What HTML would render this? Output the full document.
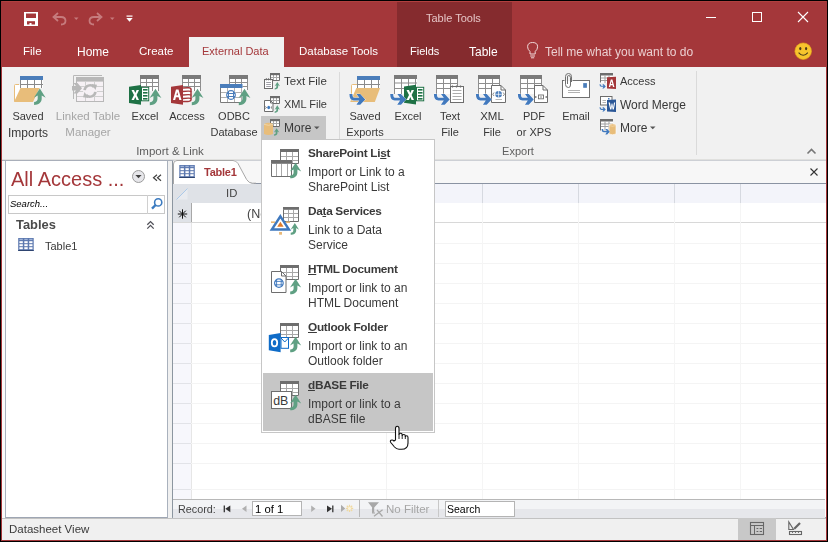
<!DOCTYPE html>
<html><head><meta charset="utf-8">
<style>
*{margin:0;padding:0;box-sizing:border-box}
html,body{width:828px;height:542px;overflow:hidden;background:#F0F0F0;font-family:"Liberation Sans",sans-serif;color:#383838;-webkit-font-smoothing:antialiased}
.a{position:absolute}
.t{position:absolute;white-space:nowrap;line-height:1;will-change:transform}
svg{position:absolute;overflow:visible}
.mt{font-size:11.8px;font-weight:bold;color:#3A3A3A;letter-spacing:-0.3px}
.md{font-size:12px;color:#3A3A3A}
u{text-decoration:underline;text-underline-offset:1px}
</style></head><body>

<!-- title bar -->
<div class="a" style="left:0;top:0;width:828px;height:67px;background:#A4373A"></div>
<div class="a" style="left:397px;top:2px;width:115px;height:65px;background:#852B2E"></div><div class="a" style="left:1px;top:1px;width:826px;height:1px;background:#B0403F"></div>
<div class="t" style="left:426px;top:13px;font-size:11px;color:#E5C4C5">Table Tools</div>

<!-- tabs -->
<div class="a" style="left:189px;top:37px;width:95px;height:30px;background:#F1F1F1"></div>
<div class="t" style="left:23px;top:45.5px;font-size:11.5px;color:#fff">File</div>
<div class="t" style="left:77px;top:45.5px;font-size:12px;color:#fff">Home</div>
<div class="t" style="left:139px;top:45.5px;font-size:11.5px;color:#fff">Create</div>
<div class="t" style="left:202px;top:45.5px;font-size:11px;color:#A4373A">External Data</div>
<div class="t" style="left:299px;top:45.5px;font-size:11.5px;color:#fff">Database Tools</div>
<div class="t" style="left:410px;top:45.5px;font-size:11px;color:#fff">Fields</div>
<div class="t" style="left:469px;top:45.5px;font-size:12px;color:#fff">Table</div>
<div class="t" style="left:545px;top:45.5px;font-size:12px;color:#EBCFD0">Tell me what you want to do</div>

<!--TITLESVG--><svg class="a" style="left:0;top:0" width="828" height="70" viewBox="0 0 828 70"><rect x="24" y="12" width="14" height="14" fill="#fff"/><rect x="26" y="13.5" width="10" height="4.5" fill="#A4373A"/><rect x="27" y="21.2" width="8" height="3.3" fill="#A4373A"/><rect x="29.5" y="23" width="2" height="2" fill="#fff"/><path d="M54.5,17 H61 Q65.5,17 65.5,20.8 Q65.5,24.5 61,24.5" fill="none" stroke="#C67B7D" stroke-width="1.8"/><path d="M58,13 L53.5,17 L58,21" fill="none" stroke="#C67B7D" stroke-width="1.8"/><path d="M74,17.5 H78.5 L76.25,20 Z" fill="#C67B7D"/><path d="M100.5,17 H94 Q89.5,17 89.5,20.8 Q89.5,24.5 94,24.5" fill="none" stroke="#C67B7D" stroke-width="1.8"/><path d="M97,13 L101.5,17 L97,21" fill="none" stroke="#C67B7D" stroke-width="1.8"/><path d="M110,17.5 H114.5 L112.25,20 Z" fill="#C67B7D"/><rect x="126.5" y="15.5" width="6" height="1.2" fill="#fff"/><path d="M126.3,18 H132.7 L129.5,21.8 Z" fill="#fff"/><rect x="706" y="17" width="10" height="1" fill="#fff"/><rect x="752.5" y="12.5" width="9" height="9" fill="none" stroke="#fff" stroke-width="1"/><path d="M798,12 L808,22 M808,12 L798,22" stroke="#fff" stroke-width="1.1"/><path d="M530,51.5 Q527.6,49.5 527.6,46.8 Q527.6,42.5 532.6,42.5 Q537.6,42.5 537.6,46.8 Q537.6,49.5 535.2,51.5 V54 H530 Z" fill="none" stroke="#F0D8D8" stroke-width="1"/><path d="M530.2,56 H535 M531,57.8 H534.2" stroke="#F0D8D8" stroke-width="1"/><circle cx="803.2" cy="51.2" r="8.3" fill="#F7C42D" stroke="#E6A817" stroke-width="0.6"/><ellipse cx="800.3" cy="48.6" rx="1.1" ry="1.6" fill="#4A3A1A"/><ellipse cx="806.1" cy="48.6" rx="1.1" ry="1.6" fill="#4A3A1A"/><path d="M798.6,52.6 Q803.2,58 807.8,52.6" fill="none" stroke="#4A3A1A" stroke-width="1.1"/></svg><!--/TITLESVG-->
<!-- ribbon -->
<div class="a" style="left:0;top:67px;width:828px;height:93px;background:#F1F1F1;border-bottom:1px solid #E0E0DE"></div>
<div class="a" style="left:339px;top:72px;width:1px;height:84px;background:#DADADA"></div>
<div class="a" style="left:696px;top:71px;width:1px;height:84px;background:#DADADA"></div>
<div id="rl" style="position:absolute;left:0;top:0">
<div class="t c" style="left:-22px;top:110.6px;width:100px;text-align:center;font-size:11px">Saved</div>
<div class="t c" style="left:-22px;top:126.6px;width:100px;text-align:center;font-size:12px">Imports</div>
<div class="t c" style="left:38px;top:110.6px;width:100px;text-align:center;font-size:11.5px;color:#A6A6A6">Linked Table</div>
<div class="t c" style="left:38px;top:126.6px;width:100px;text-align:center;font-size:11.5px;color:#A6A6A6">Manager</div>
<div class="t c" style="left:95px;top:110.6px;width:100px;text-align:center;font-size:11px">Excel</div>
<div class="t c" style="left:137px;top:110.6px;width:100px;text-align:center;font-size:11px">Access</div>
<div class="t c" style="left:184px;top:110.6px;width:100px;text-align:center;font-size:11px">ODBC</div>
<div class="t c" style="left:184px;top:126.6px;width:100px;text-align:center;font-size:11px">Database</div>
<div class="t c" style="left:120px;top:146.2px;width:100px;text-align:center;font-size:11.5px;color:#5E5E5E">Import &amp; Link</div>
<div class="t" style="left:283.5px;top:76.4px;font-size:11.5px">Text File</div>
<div class="t" style="left:283.5px;top:98.9px;font-size:11px">XML File</div>
<div class="a" style="left:261px;top:116px;width:65px;height:23px;background:#C6C6C6"></div>
<div class="t" style="left:283.5px;top:122.2px;font-size:12px">More</div>
<div class="t c" style="left:315px;top:110.6px;width:100px;text-align:center;font-size:11px">Saved</div>
<div class="t c" style="left:315px;top:126.6px;width:100px;text-align:center;font-size:11px">Exports</div>
<div class="t c" style="left:358px;top:110.6px;width:100px;text-align:center;font-size:11px">Excel</div>
<div class="t c" style="left:400px;top:110.6px;width:100px;text-align:center;font-size:11px">Text</div>
<div class="t c" style="left:400px;top:126.6px;width:100px;text-align:center;font-size:11px">File</div>
<div class="t c" style="left:441.5px;top:110.6px;width:100px;text-align:center;font-size:11.5px">XML</div>
<div class="t c" style="left:442px;top:126.6px;width:100px;text-align:center;font-size:11px">File</div>
<div class="t c" style="left:483.5px;top:110.6px;width:100px;text-align:center;font-size:11px">PDF</div>
<div class="t c" style="left:484px;top:126.6px;width:100px;text-align:center;font-size:11px">or XPS</div>
<div class="t c" style="left:525.5px;top:110.6px;width:100px;text-align:center;font-size:11px">Email</div>
<div class="t c" style="left:467.5px;top:146.2px;width:100px;text-align:center;font-size:11px;color:#5E5E5E">Export</div>
<div class="t" style="left:619.5px;top:76.4px;font-size:11px">Access</div>
<div class="t" style="left:619.5px;top:98.9px;font-size:12px">Word Merge</div>
<div class="t" style="left:619.5px;top:122.2px;font-size:12px">More</div>
</div>

<!--RIBBONSVG--><svg class="a" style="left:0;top:0" width="828" height="542" viewBox="0 0 828 542"><defs>
<path id="ga" d="M0,-0.3 L5.9,9 L1.9,6.8 L1.9,10 C1.9,13.8 -1.3,16.1 -5.7,16.1 L-5.7,13.1 C-3.6,13.1 -2.1,12.1 -2.1,10 L-2.1,6.8 L-5.9,9 Z" fill="#5FA083"/>
<path id="ba" d="M0,0 L-5,5.2 L-8.8,5.2 L-5.9,1.05 L-11.3,1.05 Q-15.8,1.05 -15.8,-5.35 L-12.8,-5.35 Q-12.8,-1.65 -11,-1.65 L-5.9,-1.65 L-8.7,-5.35 L-5,-5.35 Z" fill="#4179BE" stroke="#fff" stroke-width="0.7" paint-order="stroke"/>
</defs><path d="M14.5,101.5 V85.5 Q14.5,84.5 15.5,84.5 H19" fill="none" stroke="#E8BD7A" stroke-width="1"/><rect x="15" y="85" width="5" height="16" fill="#fff"/><rect x="20" y="76" width="23" height="12" fill="#fff"/><rect x="20" y="76" width="23" height="4" fill="#4A7DBA"/><rect x="20" y="80" width="1" height="8" fill="#8A8A8A"/><rect x="27" y="80" width="1" height="8" fill="#8A8A8A"/><rect x="34" y="80" width="1" height="8" fill="#8A8A8A"/><rect x="41" y="80" width="1" height="8" fill="#8A8A8A"/><rect x="20" y="84" width="23" height="1" fill="#8A8A8A"/><path d="M20.5,88 H39.5 L33,102 H14 Z" fill="#E8BD7A"/><use href="#ga" transform="translate(39.8,88.8) scale(1)"/><path d="M73.5,99 V75.5 H102" fill="none" stroke="#B8B8B8" stroke-width="1"/><rect x="76.5" y="77.5" width="27" height="24" fill="#F6F1F5" stroke="#B8B8B8" stroke-width="1"/><rect x="76" y="77" width="28" height="4.6" fill="#B8B8B8"/><rect x="77" y="86" width="26" height="1" fill="#CFCFCF"/><rect x="77" y="91" width="26" height="1" fill="#CFCFCF"/><rect x="77" y="96" width="26" height="1" fill="#CFCFCF"/><rect x="85" y="81" width="1" height="20" fill="#CFCFCF"/><rect x="94" y="81" width="1" height="20" fill="#CFCFCF"/><path d="M72,86 H76 L73.5,83 H77.5 L82,88.3 L77.5,93.5 H73.5 L76,90.5 H72 Z" fill="#B8B8B8"/><circle cx="90" cy="91" r="7" fill="#F6F1F5"/><path d="M84.6,90.2 A5.5,5.5 0 0 1 94,87" fill="none" stroke="#B8B8B8" stroke-width="2.6"/><path d="M91.5,84 L97,84.8 L95.5,90 Z" fill="#B8B8B8"/><path d="M95.4,91.8 A5.5,5.5 0 0 1 86,95" fill="none" stroke="#B8B8B8" stroke-width="2.6"/><path d="M88.5,98 L83,97.2 L84.5,92 Z" fill="#B8B8B8"/><rect x="140" y="75" width="19" height="16" fill="#fff"/><rect x="140" y="75" width="19" height="4" fill="#7A7A7A"/><rect x="140" y="79" width="1" height="12" fill="#8E8E8E"/><rect x="146" y="79" width="1" height="12" fill="#8E8E8E"/><rect x="152" y="79" width="1" height="12" fill="#8E8E8E"/><rect x="158" y="79" width="1" height="12" fill="#8E8E8E"/><rect x="140" y="82" width="19" height="1" fill="#8E8E8E"/><rect x="140" y="86" width="19" height="1" fill="#8E8E8E"/><path d="M129,86.8 L141,85 V104.7 L129,103 Z" fill="#1E7145"/><rect x="141.5" y="87.3" width="7.2" height="13.5" fill="#fff" stroke="#1E7145" stroke-width="1"/><rect x="143" y="89" width="4.5" height="1.6" fill="#1E7145"/><rect x="143" y="92" width="4.5" height="1.6" fill="#1E7145"/><rect x="143" y="95" width="4.5" height="1.6" fill="#1E7145"/><rect x="143" y="98" width="4.5" height="1.6" fill="#1E7145"/><path d="M131.5,90 H134 L135.3,93 L136.6,90 H139 L136.6,95 L139,100 H136.6 L135.3,97 L134,100 H131.5 L134,95 Z" fill="#fff"/><use href="#ga" transform="translate(155.5,89.1) scale(1)"/><rect x="182" y="75" width="19" height="16" fill="#fff"/><rect x="182" y="75" width="19" height="4" fill="#7A7A7A"/><rect x="182" y="79" width="1" height="12" fill="#8E8E8E"/><rect x="188" y="79" width="1" height="12" fill="#8E8E8E"/><rect x="194" y="79" width="1" height="12" fill="#8E8E8E"/><rect x="200" y="79" width="1" height="12" fill="#8E8E8E"/><rect x="182" y="82" width="19" height="1" fill="#8E8E8E"/><rect x="182" y="86" width="19" height="1" fill="#8E8E8E"/><path d="M171,86.8 L183,85 V104.7 L171,103 Z" fill="#A4373A"/><path d="M183,88 Q191,87 191,89 V100 Q191,102 183,101.5" fill="#fff" stroke="#A4373A" stroke-width="1.5"/><path d="M183,91.5 Q191,90.5 191,92.0" fill="none" stroke="#A4373A" stroke-width="1.4"/><path d="M183,95 Q191,94 191,95.5" fill="none" stroke="#A4373A" stroke-width="1.4"/><path d="M183,98.5 Q191,97.5 191,99.0" fill="none" stroke="#A4373A" stroke-width="1.4"/><path d="M173,100 L176,89.5 H178.5 L181.5,100 H179.3 L178.6,97.3 H175.9 L175.2,100 Z M176.4,95.3 H178.1 L177.25,92 Z" fill="#fff" fill-rule="evenodd"/><use href="#ga" transform="translate(197.5,89.1) scale(1)"/><rect x="229" y="75" width="19" height="15" fill="#fff"/><rect x="229" y="75" width="19" height="4" fill="#7A7A7A"/><rect x="229" y="79" width="1" height="11" fill="#8E8E8E"/><rect x="235" y="79" width="1" height="11" fill="#8E8E8E"/><rect x="241" y="79" width="1" height="11" fill="#8E8E8E"/><rect x="247" y="79" width="1" height="11" fill="#8E8E8E"/><rect x="229" y="82" width="19" height="1" fill="#8E8E8E"/><rect x="229" y="86" width="19" height="1" fill="#8E8E8E"/><rect x="220" y="84" width="22.5" height="19" fill="#fff"/><rect x="220" y="84" width="22.5" height="4" fill="#4A7DBA"/><path d="M220.5,88 V102.5 H242" fill="none" stroke="#7A7A7A" stroke-width="1"/><rect x="221" y="92" width="21" height="1" fill="#B0B0B0"/><rect x="221" y="97" width="21" height="1" fill="#B0B0B0"/><rect x="227" y="88" width="1" height="14" fill="#B0B0B0"/><rect x="234" y="88" width="1" height="14" fill="#B0B0B0"/><rect x="241" y="88" width="1" height="14" fill="#B0B0B0"/><circle cx="231" cy="95" r="5" fill="#fff"/><circle cx="231" cy="95" r="4.3" fill="none" stroke="#4A7DBA" stroke-width="1.2"/><path d="M228.5,91.5 V98.5 M233.5,91.5 V98.5 M227,93.5 H235 M227,96.5 H235" stroke="#4A7DBA" stroke-width="1"/><use href="#ga" transform="translate(244.5,89.1) scale(1)"/><rect x="270" y="73" width="10" height="8" fill="#fff"/><path d="M273.5,75 V80 M276.5,75 V80 M270,77.5 H280" stroke="#A8A8A8" stroke-width="1"/><rect x="270" y="73" width="10" height="2.2" fill="#6D6D6D"/><path d="M270.5,75 V80.5 H279.5 V75" fill="none" stroke="#6D6D6D" stroke-width="1"/><rect x="264.5" y="79.5" width="8" height="9" fill="#fff" stroke="#6D6D6D" stroke-width="1"/><rect x="265.8" y="78.3" width="1.2" height="2" fill="#6D6D6D"/><rect x="267.9" y="78.3" width="1.2" height="2" fill="#6D6D6D"/><rect x="270" y="78.3" width="1.2" height="2" fill="#6D6D6D"/><path d="M266.2,82.5 H271 M266.2,84.5 H271 M266.2,86.5 H271" stroke="#A0A0A8" stroke-width="1"/><use href="#ga" transform="translate(277.3,82.2) scale(0.46)"/><rect x="270" y="96" width="10" height="8" fill="#fff"/><path d="M273.5,98 V103 M276.5,98 V103 M270,100.5 H280" stroke="#A8A8A8" stroke-width="1"/><rect x="270" y="96" width="10" height="2.2" fill="#6D6D6D"/><path d="M270.5,98 V103.5 H279.5 V98" fill="none" stroke="#6D6D6D" stroke-width="1"/><path d="M264.5,100.5 H270.5 L273,103 V111.5 H264.5 Z" fill="#fff" stroke="#6D6D6D" stroke-width="1"/><path d="M270.5,100.5 V103 H273" fill="none" stroke="#6D6D6D" stroke-width="1"/><ellipse cx="268.7" cy="107.5" rx="1.4" ry="1.7" fill="#3F78BD"/><path d="M265.3,106.5 L266.5,107.5 L265.3,108.5 M272.1,106.5 L270.9,107.5 L272.1,108.5" fill="none" stroke="#555" stroke-width="0.8"/><use href="#ga" transform="translate(277.3,105.5) scale(0.46)"/><rect x="270" y="119" width="10" height="8" fill="#fff"/><path d="M273.5,121 V126 M276.5,121 V126 M270,123.5 H280" stroke="#A8A8A8" stroke-width="1"/><rect x="270" y="119" width="10" height="2.2" fill="#6D6D6D"/><path d="M270.5,121 V126.5 H279.5 V121" fill="none" stroke="#6D6D6D" stroke-width="1"/><path d="M264,124 Q268.5,121.5 273,124 V134 Q268.5,136 264,134 Z" fill="#E8BD7A"/><path d="M264,124.3 Q268.5,126.3 273,124.3" fill="none" stroke="#F6E2BE" stroke-width="0.6"/><use href="#ga" transform="translate(276.6,128.3) scale(0.46)"/><path d="M351.5,94 V85.5 Q351.5,84.5 352.5,84.5 H357" fill="none" stroke="#E8BD7A" stroke-width="1"/><rect x="352" y="85" width="5" height="10" fill="#fff"/><rect x="357" y="76" width="23" height="12" fill="#fff"/><rect x="357" y="76" width="23" height="4" fill="#4A7DBA"/><rect x="357" y="80" width="1" height="8" fill="#8A8A8A"/><rect x="364" y="80" width="1" height="8" fill="#8A8A8A"/><rect x="371" y="80" width="1" height="8" fill="#8A8A8A"/><rect x="378" y="80" width="1" height="8" fill="#8A8A8A"/><rect x="357" y="84" width="23" height="1" fill="#8A8A8A"/><path d="M356.3,88 H380.1 L374.8,102 H350.2 Z" fill="#E8BD7A"/><use href="#ba" transform="translate(365.2,99.45) scale(1)"/><rect x="394" y="75" width="23" height="19" fill="#fff"/><rect x="394" y="75" width="23" height="4" fill="#7A7A7A"/><rect x="394" y="79" width="1" height="15" fill="#8E8E8E"/><rect x="401" y="79" width="1" height="15" fill="#8E8E8E"/><rect x="408" y="79" width="1" height="15" fill="#8E8E8E"/><rect x="415" y="79" width="1" height="15" fill="#8E8E8E"/><rect x="394" y="82.5" width="23" height="1" fill="#8E8E8E"/><rect x="394" y="88" width="23" height="1" fill="#8E8E8E"/><path d="M404,86.5 L416,84.7 V104.5 L404,102.8 Z" fill="#1E7145"/><rect x="416.5" y="87.3" width="7.2" height="13.5" fill="#fff" stroke="#1E7145" stroke-width="1"/><rect x="418" y="89" width="4.5" height="1.6" fill="#1E7145"/><rect x="418" y="92" width="4.5" height="1.6" fill="#1E7145"/><rect x="418" y="95" width="4.5" height="1.6" fill="#1E7145"/><rect x="418" y="98" width="4.5" height="1.6" fill="#1E7145"/><path d="M406.5,90 H409 L410.3,93 L411.6,90 H414 L411.6,95 L414,100 H411.6 L410.3,97 L409,100 H406.5 L409,95 Z" fill="#fff"/><use href="#ba" transform="translate(406,99.45) scale(1)"/><rect x="436" y="75" width="22" height="19" fill="#fff"/><rect x="436" y="75" width="22" height="4" fill="#7A7A7A"/><rect x="436" y="79" width="1" height="15" fill="#8E8E8E"/><rect x="443" y="79" width="1" height="15" fill="#8E8E8E"/><rect x="450" y="79" width="1" height="15" fill="#8E8E8E"/><rect x="457" y="79" width="1" height="15" fill="#8E8E8E"/><rect x="436" y="83" width="22" height="1" fill="#8E8E8E"/><rect x="436" y="88" width="22" height="1" fill="#8E8E8E"/><rect x="450.5" y="86.5" width="13" height="16" fill="#fff" stroke="#6D6D6D" stroke-width="1"/><path d="M452.5,85.5 V87.5 M456.5,85.5 V87.5 M460.5,85.5 V87.5" stroke="#6D6D6D" stroke-width="1.2"/><path d="M452.5,90.5 H461.5 M452.5,93.5 H461.5 M452.5,96.5 H461.5 M452.5,99.5 H461.5" stroke="#A4A4A4" stroke-width="0.9"/><use href="#ba" transform="translate(449.7,99.45) scale(1)"/><rect x="478" y="75" width="22" height="19" fill="#fff"/><rect x="478" y="75" width="22" height="4" fill="#7A7A7A"/><rect x="478" y="79" width="1" height="15" fill="#8E8E8E"/><rect x="485" y="79" width="1" height="15" fill="#8E8E8E"/><rect x="492" y="79" width="1" height="15" fill="#8E8E8E"/><rect x="499" y="79" width="1" height="15" fill="#8E8E8E"/><rect x="478" y="83" width="22" height="1" fill="#8E8E8E"/><rect x="478" y="88" width="22" height="1" fill="#8E8E8E"/><path d="M491.5,85.5 H501 L505.5,90 V102.5 H491.5 Z" fill="#fff" stroke="#6D6D6D" stroke-width="1"/><path d="M501,85.5 V90 H505.5" fill="none" stroke="#6D6D6D" stroke-width="1"/><circle cx="498.6" cy="94.3" r="3.3" fill="#4A7DBA"/><path d="M495.3,94.3 H501.9 M498.6,91 V97.6" stroke="#fff" stroke-width="0.7"/><path d="M494,92.5 L492.8,94.3 L494,96 M503.2,92.5 L504.4,94.3 L503.2,96" fill="none" stroke="#6D6D6D" stroke-width="0.8"/><path d="M495.5,99.5 H502" stroke="#A4A4A4" stroke-width="0.8"/><use href="#ba" transform="translate(491.7,99.45) scale(1)"/><rect x="520" y="75" width="22" height="19" fill="#fff"/><rect x="520" y="75" width="22" height="4" fill="#7A7A7A"/><rect x="520" y="79" width="1" height="15" fill="#8E8E8E"/><rect x="527" y="79" width="1" height="15" fill="#8E8E8E"/><rect x="534" y="79" width="1" height="15" fill="#8E8E8E"/><rect x="541" y="79" width="1" height="15" fill="#8E8E8E"/><rect x="520" y="83" width="22" height="1" fill="#8E8E8E"/><rect x="520" y="88" width="22" height="1" fill="#8E8E8E"/><path d="M534.5,85.5 H543 L547.5,90 V102.5 H534.5 Z" fill="#fff" stroke="#6D6D6D" stroke-width="1"/><path d="M543,85.5 V90 H547.5" fill="none" stroke="#6D6D6D" stroke-width="1"/><rect x="538.5" y="95" width="5" height="3.8" fill="none" stroke="#6D6D6D" stroke-width="0.9"/><path d="M535,96.9 H536.5 M545.5,96.9 H547" stroke="#6D6D6D" stroke-width="1.5"/><path d="M540,97 H542" stroke="#6D6D6D" stroke-width="0.8"/><use href="#ba" transform="translate(533.7,99.45) scale(1)"/><rect x="562.5" y="80.5" width="27" height="17" fill="#fff" stroke="#707070" stroke-width="1"/><rect x="583.2" y="83.1" width="3.7" height="4.7" fill="#4A7DBA"/><path d="M568,90.5 H580 M568,92.5 H580" stroke="#A8A8A8" stroke-width="0.9"/><rect x="564.5" y="79" width="8" height="2" fill="#F1F1F1"/><path d="M571.5,82 V76.5 Q571.5,73.5 568.5,73.5 Q565.5,73.5 565.5,76.5 V84.5 Q565.5,87.5 568.5,87.5 Q570.5,87.5 570.5,85 V77.5 Q570.5,75.5 568.5,75.5 Q567.5,75.5 567.5,77 V84" fill="none" stroke="#707070" stroke-width="1"/><rect x="600" y="73" width="13" height="10" fill="#fff"/><rect x="600" y="73" width="13" height="2.5" fill="#6D6D6D"/><rect x="604.5" y="75.5" width="1" height="7.5" fill="#A0A0A0"/><rect x="608.5" y="75.5" width="1" height="7.5" fill="#A0A0A0"/><rect x="600" y="77.5" width="13" height="1" fill="#A0A0A0"/><rect x="600" y="80" width="13" height="1" fill="#A0A0A0"/><path d="M600.5,75 V82.5" stroke="#6D6D6D" stroke-width="1"/><path d="M607,77.2 L616,76.8 V89 L607,88.6 Z" fill="#A4373A"/><path d="M608.8,87 L610.8,79.5 H612.4 L614.4,87 H613 L612.6,85.2 H610.6 L610.2,87 Z M610.9,84 H612.3 L611.6,81.2 Z" fill="#fff" fill-rule="evenodd"/><use href="#ba" transform="translate(605.8,86.4) scale(0.4)"/><rect x="600.5" y="96.5" width="11.5" height="8.5" fill="#fff" stroke="#6D6D6D" stroke-width="1"/><path d="M602.5,100.5 H606 M602.5,102.5 H606" stroke="#A0A0A0" stroke-width="0.8"/><rect x="608" y="98" width="1.5" height="1.5" fill="#4A7DBA"/><path d="M607,100 L616,99.6 V112 L607,111.6 Z" fill="#2B5797"/><path d="M608.5,102.5 H610 L610.9,107.5 L611.6,103.5 H612.4 L613.1,107.5 L614,102.5 H615.2 L613.8,109.5 H612.6 L612,106 L611.4,109.5 H610.2 Z" fill="#fff"/><use href="#ba" transform="translate(605.8,109.5) scale(0.4)"/><rect x="600" y="119" width="13" height="12" fill="#fff"/><rect x="600" y="119" width="13" height="2.5" fill="#6D6D6D"/><rect x="604.5" y="121.5" width="1" height="9.5" fill="#A0A0A0"/><rect x="608.5" y="121.5" width="1" height="9.5" fill="#A0A0A0"/><rect x="600" y="123.5" width="13" height="1" fill="#A0A0A0"/><rect x="600" y="126" width="13" height="1" fill="#A0A0A0"/><path d="M600.5,121 V130.5" stroke="#6D6D6D" stroke-width="1"/><path d="M609,124.5 Q612.5,123 616,124.5 V134 Q612.5,135.5 609,134 Z" fill="#E8BD7A" stroke="#fff" stroke-width="0.6"/><path d="M609,125.5 Q612.5,127 616,125.5" fill="none" stroke="#F6E2BE" stroke-width="0.6"/><use href="#ba" transform="translate(609.8,131.8) scale(0.52)"/><path d="M807.5,153.5 L811.5,149.5 L815.5,153.5" fill="none" stroke="#777" stroke-width="1.6"/><path d="M314,126.5 H319.5 L316.75,129.3 Z" fill="#555"/><path d="M650,126.5 H655.5 L652.75,129.3 Z" fill="#555"/></svg><!--/RIBBONSVG-->
<!-- nav pane -->
<div class="a" style="left:5px;top:160px;width:163px;height:358px;background:#fff;border-left:1px solid #A9B1BD;border-right:1px solid #A9B1BD;border-bottom:1px solid #9EA6B3"></div>
<div class="t" style="left:11px;top:168.9px;font-size:20px;color:#A4373A">All Access ...</div>
<div class="a" style="left:8px;top:195px;width:157px;height:19px;border:1px solid #C8C8C8;background:#fff"></div>
<div class="a" style="left:147px;top:195px;width:1px;height:19px;background:#D0D0D0"></div>
<div class="t" style="left:10px;top:199.3px;font-size:9.5px;font-style:italic;color:#000">Search...</div>
<div class="t" style="left:15.6px;top:218.5px;font-size:12.9px;font-weight:bold;color:#4A4A4A">Tables</div>
<div class="t" style="left:45px;top:240.7px;font-size:11px;color:#3A3A3A">Table1</div>
<svg class="a" style="left:0;top:0" width="828" height="542" viewBox="0 0 828 542">
<circle cx="138.5" cy="176.5" r="6" fill="#E6E6EA" stroke="#9A9A9A" stroke-width="1"/>
<path d="M135.4,175 H141.6 L138.5,178.3 Z" fill="#404040"/>
<path d="M157,174.8 L153.5,177.8 L157,180.8 M161,174.8 L157.5,177.8 L161,180.8" fill="none" stroke="#404040" stroke-width="1.2"/>
<circle cx="158.2" cy="202.4" r="3.6" fill="none" stroke="#3C7BC0" stroke-width="1.6"/>
<path d="M155.6,205 L152,208.6" stroke="#3C7BC0" stroke-width="2.4"/>
<path d="M147.3,224.8 L150.5,221.6 L153.7,224.8 M147.3,228.6 L150.5,225.4 L153.7,228.6" fill="none" stroke="#505058" stroke-width="1.3"/>
<rect x="18.2" y="238" width="15.5" height="13" fill="#5B77AE"/><rect x="19.4" y="238.8" width="3.4" height="1.3" fill="#9FB3D8"/><rect x="19.4" y="241.2" width="3.4" height="2" fill="#fff"/><rect x="19.4" y="244.2" width="3.4" height="2" fill="#fff"/><rect x="19.4" y="247.2" width="3.4" height="2" fill="#fff"/><rect x="24.299999999999997" y="238.8" width="3.4" height="1.3" fill="#9FB3D8"/><rect x="24.299999999999997" y="241.2" width="3.4" height="2" fill="#fff"/><rect x="24.299999999999997" y="244.2" width="3.4" height="2" fill="#fff"/><rect x="24.299999999999997" y="247.2" width="3.4" height="2" fill="#fff"/><rect x="29.2" y="238.8" width="3.3" height="1.3" fill="#9FB3D8"/><rect x="29.2" y="241.2" width="3.3" height="2" fill="#fff"/><rect x="29.2" y="244.2" width="3.3" height="2" fill="#fff"/><rect x="29.2" y="247.2" width="3.3" height="2" fill="#fff"/><rect x="18.2" y="250" width="15.5" height="1" fill="#2E4470"/>
</svg>

<!-- document area -->
<div class="a" style="left:172px;top:160px;width:654px;height:358px;background:#fff;border-left:1px solid #8C96A0;border-bottom:1px solid #A0A8B4"></div>
<div class="a" style="left:173px;top:160px;width:653px;height:23px;background:#F7F7F7"></div>
<div class="a" style="left:2px;top:160px;width:171px;height:1px;background:#A9AFBA"></div><div class="a" style="left:173px;top:160px;width:653px;height:1px;background:#CDD0D5"></div>
<div class="a" style="left:173px;top:183px;width:653px;height:1px;background:#8A93A2"></div>
<svg class="a" style="left:0;top:0" width="828" height="542" viewBox="0 0 828 542">
<path d="M173,184 V164 Q173,160 177,160 H233 Q236.5,160 238.5,163.5 L247,179.5 Q249,183.5 252.5,183.5 H254 V184 Z" fill="#fff"/><path d="M173.5,184 V164 Q173.5,160.5 177,160.5 H233 Q236,160.5 238,163.5 L246.6,179.5 Q248.8,183.2 252.5,183.2 H256" fill="none" stroke="#A6A6A6" stroke-width="1"/>
<rect x="179.3" y="165" width="15.5" height="13" fill="#5B77AE"/><rect x="180.5" y="165.8" width="3.4" height="1.3" fill="#9FB3D8"/><rect x="180.5" y="168.2" width="3.4" height="2" fill="#fff"/><rect x="180.5" y="171.2" width="3.4" height="2" fill="#fff"/><rect x="180.5" y="174.2" width="3.4" height="2" fill="#fff"/><rect x="185.4" y="165.8" width="3.4" height="1.3" fill="#9FB3D8"/><rect x="185.4" y="168.2" width="3.4" height="2" fill="#fff"/><rect x="185.4" y="171.2" width="3.4" height="2" fill="#fff"/><rect x="185.4" y="174.2" width="3.4" height="2" fill="#fff"/><rect x="190.3" y="165.8" width="3.3" height="1.3" fill="#9FB3D8"/><rect x="190.3" y="168.2" width="3.3" height="2" fill="#fff"/><rect x="190.3" y="171.2" width="3.3" height="2" fill="#fff"/><rect x="190.3" y="174.2" width="3.3" height="2" fill="#fff"/><rect x="179.3" y="177" width="15.5" height="1" fill="#2E4470"/>
<path d="M810.5,168.5 L817.5,175.5 M817.5,168.5 L810.5,175.5" stroke="#333" stroke-width="1.1"/>
</svg>
<div class="t" style="left:203.5px;top:166.5px;font-size:11px;font-weight:bold;letter-spacing:-0.25px;color:#A4373A">Table1</div>
<!-- datasheet -->
<div class="a" style="left:173px;top:184px;width:261px;height:19px;background:#DFE2E7"></div>
<div class="a" style="left:434px;top:184px;width:392px;height:19px;background:#F3F4FA"></div>
<div class="a" style="left:482px;top:184px;width:1px;height:19px;background:#D6D9E0"></div><div class="a" style="left:578px;top:184px;width:1px;height:19px;background:#D6D9E0"></div><div class="a" style="left:674px;top:184px;width:1px;height:19px;background:#D6D9E0"></div><div class="a" style="left:740px;top:184px;width:1px;height:19px;background:#D6D9E0"></div>
<div class="a" style="left:173px;top:203px;width:18px;height:20px;background:#DFE2E7"></div>
<div class="a" style="left:173px;top:223px;width:18px;height:276px;background:#F7F7FC"></div>
<div class="a" style="left:191px;top:203px;width:1px;height:20px;background:#A8A8A8"></div><div class="a" style="left:191px;top:223px;width:1px;height:276px;background:#E6E6E6"></div>
<div class="a" style="left:173px;top:222px;width:653px;height:1px;background:#D8D8D8"></div>
<div class="a" style="left:191px;top:243px;width:635px;height:1px;background:#F4F4F4"></div><div class="a" style="left:191px;top:263px;width:635px;height:1px;background:#F4F4F4"></div><div class="a" style="left:191px;top:283px;width:635px;height:1px;background:#F4F4F4"></div><div class="a" style="left:191px;top:303px;width:635px;height:1px;background:#F4F4F4"></div><div class="a" style="left:191px;top:323px;width:635px;height:1px;background:#F4F4F4"></div><div class="a" style="left:191px;top:343px;width:635px;height:1px;background:#F4F4F4"></div><div class="a" style="left:191px;top:363px;width:635px;height:1px;background:#F4F4F4"></div><div class="a" style="left:191px;top:383px;width:635px;height:1px;background:#F4F4F4"></div><div class="a" style="left:191px;top:403px;width:635px;height:1px;background:#F4F4F4"></div><div class="a" style="left:191px;top:423px;width:635px;height:1px;background:#F4F4F4"></div><div class="a" style="left:191px;top:443px;width:635px;height:1px;background:#F4F4F4"></div><div class="a" style="left:191px;top:463px;width:635px;height:1px;background:#F4F4F4"></div><div class="a" style="left:191px;top:489px;width:635px;height:1px;background:#F4F4F4"></div><div class="a" style="left:173px;top:243px;width:18px;height:1px;background:#E2E3E8"></div><div class="a" style="left:173px;top:263px;width:18px;height:1px;background:#E2E3E8"></div><div class="a" style="left:173px;top:283px;width:18px;height:1px;background:#E2E3E8"></div><div class="a" style="left:173px;top:303px;width:18px;height:1px;background:#E2E3E8"></div><div class="a" style="left:173px;top:323px;width:18px;height:1px;background:#E2E3E8"></div><div class="a" style="left:173px;top:343px;width:18px;height:1px;background:#E2E3E8"></div><div class="a" style="left:173px;top:363px;width:18px;height:1px;background:#E2E3E8"></div><div class="a" style="left:173px;top:383px;width:18px;height:1px;background:#E2E3E8"></div><div class="a" style="left:173px;top:403px;width:18px;height:1px;background:#E2E3E8"></div><div class="a" style="left:173px;top:423px;width:18px;height:1px;background:#E2E3E8"></div><div class="a" style="left:173px;top:443px;width:18px;height:1px;background:#E2E3E8"></div><div class="a" style="left:173px;top:463px;width:18px;height:1px;background:#E2E3E8"></div><div class="a" style="left:173px;top:489px;width:18px;height:1px;background:#E2E3E8"></div><div class="a" style="left:386px;top:203px;width:1px;height:296px;background:#F3F3F3"></div><div class="a" style="left:482px;top:203px;width:1px;height:296px;background:#F5F5F5"></div><div class="a" style="left:578px;top:203px;width:1px;height:296px;background:#F5F5F5"></div><div class="a" style="left:674px;top:203px;width:1px;height:296px;background:#F5F5F5"></div><div class="a" style="left:740px;top:203px;width:1px;height:296px;background:#F5F5F5"></div>
<svg class="a" style="left:0;top:0" width="828" height="542" viewBox="0 0 828 542">
<path d="M176.5,199.5 L187.5,188.5 V199.5 Z" fill="#E9EBEF"/><path d="M176.5,199.5 L187.5,188.5" stroke="#9CC2E8" stroke-width="0.8"/>
<path d="M182.5,209.3 V218.7 M177.8,214 H187.2 M179.2,210.7 L185.8,217.3 M185.8,210.7 L179.2,217.3" stroke="#111" stroke-width="1"/>
</svg>
<div class="t" style="left:226px;top:187.8px;font-size:11.3px;color:#444">ID</div>
<div class="t" style="left:247.3px;top:207.9px;font-size:12.5px;color:#444">(New)</div>
<!-- record nav -->
<div class="a" style="left:173px;top:499px;width:652px;height:20px;background:#F3F4F6;border-top:1px solid #B8B8B8;border-bottom:1px solid #B8B8B8"></div>
<div class="a" style="left:173px;top:509px;width:652px;height:9px;background:#E6E7EB"></div>
<div class="a" style="left:2px;top:518px;width:824px;height:1px;background:#C2C2C2"></div>
<div class="a" style="left:2px;top:161px;width:3px;height:357px;background:#FAFAFA"></div>
<div class="t" style="left:178.3px;top:504px;font-size:10.8px;color:#444">Record:</div>
<div class="a" style="left:252px;top:501px;width:50px;height:15px;background:#fff;border:1px solid #B4B4B4"></div>
<div class="t" style="left:255px;top:504px;font-size:11.3px;color:#000">1 of 1</div>
<div class="a" style="left:359px;top:500px;width:1px;height:17px;background:#B8B8B8"></div>
<div class="t" style="left:386.2px;top:504px;font-size:11.5px;color:#A6A6A6">No Filter</div>
<div class="a" style="left:438px;top:500px;width:1px;height:17px;background:#C8C8C8"></div>
<div class="a" style="left:445px;top:501px;width:70px;height:16px;background:#fff;border:1px solid #B4B4B4"></div>
<div class="t" style="left:447px;top:504px;font-size:10.5px;color:#000">Search</div>
<svg class="a" style="left:0;top:0" width="828" height="542" viewBox="0 0 828 542">
<path d="M224.3,505.5 V512.2" stroke="#333" stroke-width="1.3"/><path d="M230.3,505.5 L225.3,508.85 L230.3,512.2 Z" fill="#333"/>
<path d="M246.5,505.5 L242,508.8 L246.5,512 Z" fill="#B0B0B0"/>
<path d="M311.2,505.5 L315.5,508.8 L311.2,512 Z" fill="#B0B0B0"/>
<path d="M327,505.5 L332,508.85 L327,512.2 Z" fill="#333"/><path d="M332.8,505.5 V512.2" stroke="#333" stroke-width="1.3"/>
<path d="M341,504.8 L345.2,508.4 L341,512 Z" fill="#ABABAB"/><path d="M349.5,504.8 V512 M345.8,508.4 H353.2 M346.8,505.8 L352.2,511 M352.2,505.8 L346.8,511" stroke="#F0D9A0" stroke-width="1.2"/><circle cx="349.5" cy="508.4" r="1.6" fill="#FAF3DC"/><path d="M368,502.2 H379 L374.2,507.5 V512.4 H372.2 V507.5 Z" fill="#A8A8A8"/><path d="M372.7,507.5 V513 H375" fill="none" stroke="#A8A8A8" stroke-width="1.2"/><path d="M377,509.8 L382.5,516.5 M374,516.3 L382.6,509.7" stroke="#A8A8A8" stroke-width="1.3"/>
</svg>
<!-- status bar -->
<div class="a" style="left:738px;top:518px;width:38px;height:22px;background:#C8C8C8"></div>
<svg class="a" style="left:0;top:0" width="828" height="542" viewBox="0 0 828 542">
<rect x="750.5" y="522.5" width="13" height="12" fill="none" stroke="#666" stroke-width="1.1"/>
<path d="M751,525.5 H763 M754.5,525.5 V534.5" stroke="#666" stroke-width="1"/>
<path d="M756.5,528.5 H758.3 M759.7,528.5 H762 M756.5,531.5 H758.3 M759.7,531.5 H762" stroke="#666" stroke-width="1.1"/>
<path d="M788.8,522 V529.5 H793.5 Z" fill="none" stroke="#666" stroke-width="1.1"/>
<path d="M794.3,528.8 L800,523" stroke="#666" stroke-width="2.2"/><path d="M793.6,529.6 L794.4,528.6" stroke="#666" stroke-width="1"/>
<rect x="789.5" y="531.5" width="12" height="3" fill="none" stroke="#666" stroke-width="1.1"/>
<path d="M792.5,531.5 V533 M795.5,531.5 V533 M798.5,531.5 V533" stroke="#666" stroke-width="0.9"/>
</svg>

<div class="t" style="left:9px;top:524px;font-size:11.5px;color:#3A3A3A">Datasheet View</div>

<!--MENU--><div class="a" style="left:261px;top:139px;width:174px;height:294px;background:#fff;border:1px solid #C6C6C6"></div>
<div class="a" style="left:263px;top:373px;width:170px;height:58px;background:#C6C6C6"></div>
<div class="t mt" style="left:308.2px;top:148.0px">SharePoint Li<u>s</u>t</div>
<div class="t md" style="left:308.2px;top:166.4px">Import or Link to a</div>
<div class="t md" style="left:308.2px;top:180.8px">SharePoint List</div>
<div class="t mt" style="left:308.2px;top:206.0px">Da<u>t</u>a Services</div>
<div class="t md" style="left:308.2px;top:224.4px">Link to a Data</div>
<div class="t md" style="left:308.2px;top:238.8px">Service</div>
<div class="t mt" style="left:308.2px;top:264.0px"><u>H</u>TML Document</div>
<div class="t md" style="left:308.2px;top:282.4px">Import or link to an</div>
<div class="t md" style="left:308.2px;top:296.8px">HTML Document</div>
<div class="t mt" style="left:308.2px;top:322.0px"><u>O</u>utlook Folder</div>
<div class="t md" style="left:308.2px;top:340.4px">Import or link to an</div>
<div class="t md" style="left:308.2px;top:354.8px">Outlook folder</div>
<div class="t mt" style="left:308.2px;top:380.0px"><u>d</u>BASE File</div>
<div class="t md" style="left:308.2px;top:398.4px">Import or link to a</div>
<div class="t md" style="left:308.2px;top:412.8px">dBASE file</div><svg class="a" style="left:0;top:0" width="828" height="542" viewBox="0 0 828 542"><rect x="280" y="149" width="19" height="15" fill="#fff"/><rect x="286" y="152" width="1" height="12" fill="#A8A8A8"/><rect x="292" y="152" width="1" height="12" fill="#A8A8A8"/><rect x="280" y="156" width="19" height="1" fill="#A8A8A8"/><rect x="280" y="160" width="19" height="1" fill="#A8A8A8"/><rect x="280" y="149" width="19" height="3" fill="#6E6E6E"/><path d="M280.5,152 V163.5 H298.5 V152" fill="none" stroke="#6E6E6E" stroke-width="1"/><rect x="271" y="160" width="21" height="17" fill="#fff"/><rect x="276" y="163.8" width="1" height="13.2" fill="#A8A8A8"/><rect x="281" y="163.8" width="1" height="13.2" fill="#A8A8A8"/><rect x="287" y="163.8" width="1" height="13.2" fill="#A8A8A8"/><rect x="271" y="160" width="21" height="3.8" fill="#6E6E6E"/><path d="M271.5,163.8 V176.5 H291.5 V163.8" fill="none" stroke="#6E6E6E" stroke-width="1"/><use href="#ga" transform="translate(295.6,163) scale(0.95)"/><rect x="283" y="207" width="16" height="15" fill="#fff"/><rect x="288" y="209.8" width="1" height="12.2" fill="#A8A8A8"/><rect x="293" y="209.8" width="1" height="12.2" fill="#A8A8A8"/><rect x="283" y="213" width="16" height="1" fill="#A8A8A8"/><rect x="283" y="217" width="16" height="1" fill="#A8A8A8"/><rect x="283" y="207" width="16" height="2.8" fill="#6E6E6E"/><path d="M283.5,209.8 V221.5 H298.5 V209.8" fill="none" stroke="#6E6E6E" stroke-width="1"/><path d="M280.4,216.3 L289,229.5 H271.8 Z" fill="none" stroke="#3F78BD" stroke-width="2.4" stroke-linejoin="miter"/><path d="M280.4,221.8 L283.6,226.8 H277.2 Z" fill="#E07B2A"/><rect x="271" y="221.4" width="4" height="1.6" fill="#E8B878"/><rect x="286" y="221.4" width="4" height="1.6" fill="#E8B878"/><rect x="279.1" y="232" width="2.9" height="2.7" fill="#E8B878"/><use href="#ga" transform="translate(294.8,223.2) scale(0.72)"/><rect x="280" y="265" width="19" height="15" fill="#fff"/><rect x="286" y="268" width="1" height="12" fill="#A8A8A8"/><rect x="292" y="268" width="1" height="12" fill="#A8A8A8"/><rect x="280" y="272" width="19" height="1" fill="#A8A8A8"/><rect x="280" y="276" width="19" height="1" fill="#A8A8A8"/><rect x="280" y="265" width="19" height="3" fill="#6E6E6E"/><path d="M280.5,268 V279.5 H298.5 V268" fill="none" stroke="#6E6E6E" stroke-width="1"/><path d="M271.5,271.5 H281.5 L286,276 V292.5 H271.5 Z" fill="#fff" stroke="#6E6E6E" stroke-width="1"/><path d="M281.5,271.5 V276 H286" fill="none" stroke="#6E6E6E" stroke-width="1"/><circle cx="278.9" cy="283.1" r="4.3" fill="#fff" stroke="#3F78BD" stroke-width="1.2"/><path d="M276.6,279.3 V286.9 M281.2,279.3 V286.9 M275,281.4 H282.8 M275,284.8 H282.8" stroke="#3F78BD" stroke-width="0.9"/><use href="#ga" transform="translate(295.6,279) scale(0.95)"/><rect x="280" y="323" width="19" height="15" fill="#fff"/><rect x="286" y="326" width="1" height="12" fill="#A8A8A8"/><rect x="292" y="326" width="1" height="12" fill="#A8A8A8"/><rect x="280" y="330" width="19" height="1" fill="#A8A8A8"/><rect x="280" y="334" width="19" height="1" fill="#A8A8A8"/><rect x="280" y="323" width="19" height="3" fill="#6E6E6E"/><path d="M280.5,326 V337.5 H298.5 V326" fill="none" stroke="#6E6E6E" stroke-width="1"/><path d="M268.8,335 L280.6,333 V352.3 L268.8,350.3 Z" fill="#0F6CC8"/><ellipse cx="274.5" cy="342.7" rx="2.7" ry="3.6" fill="none" stroke="#fff" stroke-width="1.8"/><rect x="281" y="337.5" width="7.5" height="10.8" fill="#fff" stroke="#0F6CC8" stroke-width="1"/><path d="M281,338 L284.75,342 L288.5,338" fill="none" stroke="#0F6CC8" stroke-width="1"/><use href="#ga" transform="translate(295.6,337) scale(0.95)"/><rect x="280" y="381" width="19" height="15" fill="#fff"/><rect x="286" y="384" width="1" height="12" fill="#A8A8A8"/><rect x="292" y="384" width="1" height="12" fill="#A8A8A8"/><rect x="280" y="388" width="19" height="1" fill="#A8A8A8"/><rect x="280" y="392" width="19" height="1" fill="#A8A8A8"/><rect x="280" y="381" width="19" height="3" fill="#6E6E6E"/><path d="M280.5,384 V395.5 H298.5 V384" fill="none" stroke="#6E6E6E" stroke-width="1"/><rect x="271.5" y="391.5" width="20" height="17" fill="#fff" stroke="#6E6E6E" stroke-width="1"/><text x="273.2" y="405" font-family="Liberation Sans" font-size="12.4" fill="#3A3A3A">dB</text><use href="#ga" transform="translate(295.6,395) scale(0.95)"/><path d="M395.5,440 V428.5 Q395.5,426.3 397.2,426.3 Q399,426.3 399,428.5 V435 Q399,433.2 400.6,433.2 Q402.2,433.2 402.2,435 V436 Q402.2,434.5 403.8,434.5 Q405.3,434.5 405.3,436 V437 Q405.3,435.8 406.6,435.8 Q408,435.8 408,437.5 V443 Q408,449.3 401.5,449.3 H399 Q396.5,449.3 394.5,447 L390.8,442.5 Q389.8,441 391,440.3 Q392.5,439.5 394,441 Z" fill="#fff" stroke="#111" stroke-width="1.1"/><path d="M399,434.5 V439 M402.2,435.5 V439 M405.3,436.5 V439" stroke="#111" stroke-width="0.9"/></svg><!--/MENU-->
<!-- frame -->
<div class="a" style="left:0;top:0;width:828px;height:542px;border:1px solid #000"></div>
<div class="a" style="left:1px;top:1px;width:826px;height:540px;border:1px solid #A4373A;border-top:0"></div>
</body></html>
